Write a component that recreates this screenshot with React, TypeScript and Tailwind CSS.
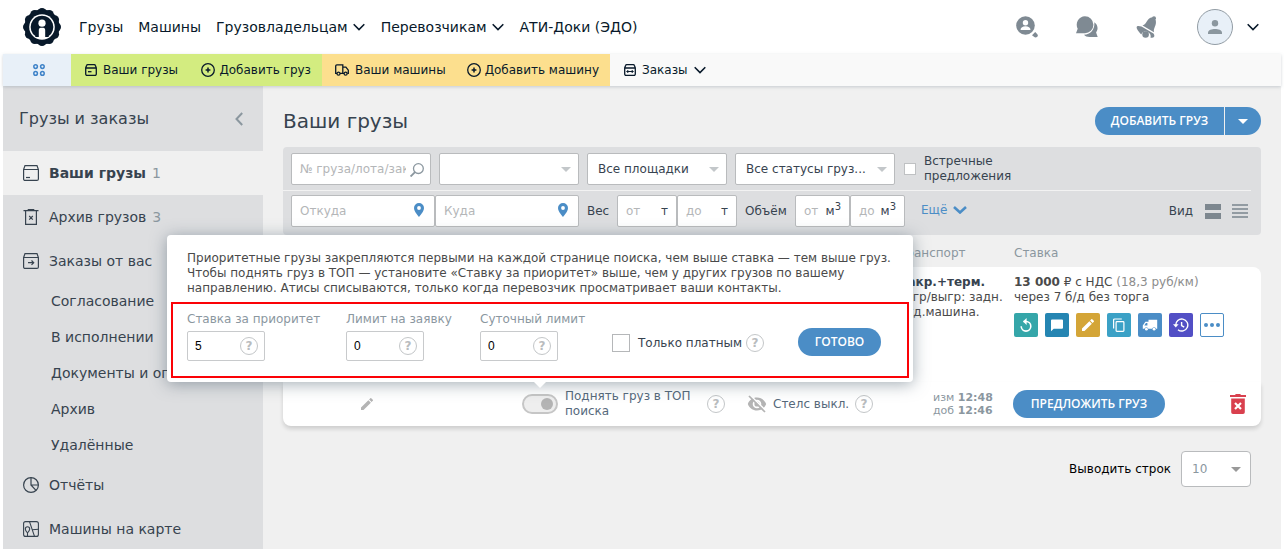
import React from "react";

const lobes = Array.from({ length: 12 }, (_, i) => (i * Math.PI) / 6);

function Logo() {
  return (
    <svg className="size-[38px]" viewBox="0 0 38 38" aria-hidden="true">
      <g fill="#08192a">
        <circle cx="19" cy="19" r="17.6" />
        {lobes.map((a) => (
          <circle key={a} cx={19 + 14.5 * Math.sin(a)} cy={19 - 14.5 * Math.cos(a)} r="4.5" />
        ))}
      </g>
      <circle cx="19" cy="19" r="12.8" fill="#fff" />
      <path
        fill="#08192a"
        d="M19 7.7A11.300 11.300 0 0 0 12.300 28.100v.9h3.500v-6.500c0-1.700.6-2.700 2-2.700h2.400c1.400 0 2 1 2 2.700V29h3.500v-.9A11.300 11.300 0 0 0 19 7.700z"
      />
      <circle cx="19" cy="15.200" r="3.600" fill="#fff" />
    </svg>
  );
}

function Chevron({ className = "" }: { className?: string }) {
  return (
    <svg className={`h-2 w-3 shrink-0 ${className}`} viewBox="0 0 12 8" fill="none" stroke="currentColor" strokeWidth="1.600" aria-hidden="true">
      <path d="M.7 1.200 6 6.500l5.300-5.300" />
    </svg>
  );
}

function Caret({ className = "" }: { className?: string }) {
  return (
    <svg className={`h-[5px] w-2.5 ${className}`} viewBox="0 0 10 5" fill="currentColor" aria-hidden="true">
      <path d="M0 0h10L5 5z" />
    </svg>
  );
}

function BoxIcon({ children, className = "size-4" }: { children?: React.ReactNode; className?: string }) {
  return (
    <svg className={className} viewBox="0 0 16 16" fill="none" stroke="currentColor" strokeWidth="1.200" aria-hidden="true">
      <path d="M.6 4.500 2 .6h12l1.400 3.900v9.400a1.500 1.500 0 0 1-1.500 1.500H2.100A1.500 1.500 0 0 1 .6 13.900zM.6 4.500h14.800" />
      {children}
    </svg>
  );
}

function SmallBox({ orders = false }: { orders?: boolean }) {
  return (
    <svg className="size-3 shrink-0" viewBox="0 0 12 12" fill="none" stroke="currentColor" strokeWidth="1.300" aria-hidden="true">
      <path d="M.7 3.800 1.600 1.500a1.200 1.200 0 0 1 1.200-.8h6.400a1.200 1.200 0 0 1 1.200.8l.9 2.300v6.200a1.300 1.300 0 0 1-1.300 1.300H2A1.300 1.300 0 0 1 .7 10zM.7 4h10.600" />
      {orders ? <path d="M2.800 7.500h6.400M4.300 6 2.800 7.500 4.300 9M7.700 6l1.500 1.500L7.700 9" strokeWidth="1" /> : <path d="M3 7.700h3.500" />}
    </svg>
  );
}

function PlusCircle() {
  return (
    <svg className="size-3.5 shrink-0" viewBox="0 0 14 14" fill="none" stroke="currentColor" strokeWidth="1.300" aria-hidden="true">
      <circle cx="7" cy="7" r="6.300" />
      <path d="M7 4.600v4.800M4.600 7h4.800" strokeWidth="1.500" />
    </svg>
  );
}

function TruckIcon() {
  return (
    <svg className="h-3 w-3.5 shrink-0" viewBox="0 0 14 12" fill="none" stroke="currentColor" strokeWidth="1.300" aria-hidden="true">
      <path d="M2 9.300H.7V2A1.200 1.200 0 0 1 1.900.8h5.900v8.500H5M7.800 3.200h3.100l2.400 3v3.100h-1M7.800 9.300H9" />
      <circle cx="3.500" cy="9.700" r="1.500" />
      <circle cx="10.600" cy="9.700" r="1.500" />
    </svg>
  );
}

function Help() {
  return (
    <button
      type="button"
      aria-label="Справка"
      className="flex size-[18px] shrink-0 items-center justify-center rounded-full border border-[#c3c6c8] bg-white text-xs font-bold leading-none text-[#b9bcbe]"
    >
      ?
    </button>
  );
}

function Select({ label, value, className = "" }: { label: string; value: string; className?: string }) {
  return (
    <div className={`relative ${className}`}>
      <select
        aria-label={label}
        className="h-8 w-full appearance-none rounded-xs border border-[#b9bbbd] bg-white pl-2.5 pr-6 text-xs text-[#37434f]"
      >
        <option>{value}</option>
      </select>
      <Caret className="pointer-events-none absolute right-2 top-3.5 text-[#c3c7ca]" />
    </div>
  );
}

function Place({ label }: { label: string }) {
  return (
    <div className="relative w-36">
      <input
        aria-label={label}
        placeholder={label}
        className="h-8 w-full rounded-xs border border-[#b9bbbd] bg-white pl-2 pr-7 text-xs placeholder:text-[#b4b6b8]"
      />
      <svg className="pointer-events-none absolute right-[11px] top-2 h-3.5 w-2.5" viewBox="0 0 10 14" aria-hidden="true">
        <path fill="#4b8dc6" fillRule="evenodd" d="M5 0a5 5 0 0 1 5 5c0 3.500-5 9-5 9S0 8.500 0 5a5 5 0 0 1 5-5zm0 3.100a1.900 1.900 0 1 0 0 3.800 1.900 1.900 0 0 0 0-3.800z" />
      </svg>
    </div>
  );
}

function Range({ label, hint, unit, className }: { label: string; hint: string; unit: React.ReactNode; className: string }) {
  return (
    <label className={`flex h-8 items-center justify-between rounded-xs border border-[#b9bbbd] bg-white px-2 text-xs text-[#37434f] ${className}`}>
      <input aria-label={`${label} ${hint}`} placeholder={hint} className="w-5 min-w-0 placeholder:text-[#b4b6b8]" />
      <span>{unit}</span>
    </label>
  );
}

const cubic = (
  <>
    м<sup className="text-[10px]">3</sup>
  </>
);

function LimitField({ id, label, value, className }: { id: string; label: string; value: string; className: string }) {
  return (
    <div className={className}>
      <label htmlFor={id} className="block whitespace-nowrap text-xs leading-4 text-[#8b979f]">
        {label}
      </label>
      <div className="mt-1 flex h-[30px] w-[78px] items-center justify-between rounded-xs border border-[#c8cacc] bg-white pl-[7px] pr-1.5">
        <input id={id} defaultValue={value} className="w-8 font-['Liberation_Sans',sans-serif] text-xs text-black" />
        <Help />
      </div>
    </div>
  );
}

function PriorityPopover() {
  return (
    <div className="absolute bottom-full left-1/2 z-10 mb-3 w-[746px] -translate-x-1/2 rounded-sm bg-white px-1 pb-1 pt-4 shadow-[0_2px_16px_rgba(70,90,105,0.5)]">
      <p className="px-4 text-xs leading-[15px] text-[#4a4a4a]">
        Приоритетные грузы закрепляются первыми на каждой странице поиска, чем выше ставка — тем выше груз.
        <br />
        Чтобы поднять груз в ТОП — установите «Ставку за приоритет» выше, чем у других грузов по вашему
        <br />
        направлению. Атисы списываются, только когда перевозчик просматривает ваши контакты.
      </p>
      <div className="mt-[6px] flex h-[76px] items-start border-2 border-[#fb0207] px-3.5 pt-[7px]">
        <LimitField id="rate" label="Ставка за приоритет" value="5" className="w-[159px]" />
        <LimitField id="order-limit" label="Лимит на заявку" value="0" className="w-[134px]" />
        <LimitField id="day-limit" label="Суточный лимит" value="0" className="w-[132px]" />
        <div className="mt-[23px] flex h-[18px] grow items-center">
          <input id="paid" type="checkbox" className="size-[18px] appearance-none border border-[#b5b7b9] bg-white" />
          <label htmlFor="paid" className="ml-2 mr-1 whitespace-nowrap text-xs text-[#37434f]">
            Только платным
          </label>
          <Help />
        </div>
        <button type="button" className="mr-3 mt-[17px] h-7 w-[83px] rounded-full bg-[#4b8dc6] font-['Open_Sans',sans-serif] text-xs font-semibold text-white">
          ГОТОВО
        </button>
      </div>
      <svg className="absolute left-1/2 top-full h-1.5 w-3 -translate-x-1/2" viewBox="0 0 12 6" fill="#fff" aria-hidden="true">
        <path d="M0 0h12L6 6z" />
      </svg>
    </div>
  );
}

function Pencil({ className }: { className: string }) {
  return (
    <svg className={className} viewBox="0 0 24 24" fill="currentColor" aria-hidden="true">
      <path d="M3 17.250V21h3.750L17.810 9.940l-3.750-3.750zM20.710 7.040a1 1 0 0 0 0-1.410l-2.340-2.340a1 1 0 0 0-1.410 0l-1.830 1.830 3.750 3.750z" />
    </svg>
  );
}

const glyph = "size-4";
const actions = [
  {
    name: "Обновить",
    color: "bg-[#35a6a9]",
    icon: (
      <svg className={glyph} viewBox="0 0 16 16" fill="none" stroke="#fff" strokeWidth="1.600">
        <path d="M3.200 9.300a4.800 4.800 0 1 0 4.800-4.800H5.500" />
        <path d="M8.600 1 5 4.500 8.600 8z" fill="#fff" stroke="none" />
      </svg>
    ),
  },
  {
    name: "Сообщение",
    color: "bg-[#2585b2]",
    icon: (
      <svg className={glyph} viewBox="0 0 16 16" fill="#fff">
        <path d="M3 2.500h10a1 1 0 0 1 1 1v7.200a1 1 0 0 1-1 1H4.700L2 14.300V3.500a1 1 0 0 1 1-1z" />
      </svg>
    ),
  },
  { name: "Изменить", color: "bg-[#d4a537]", icon: <Pencil className="size-4" /> },
  {
    name: "Копировать",
    color: "bg-[#3ba1c6]",
    icon: (
      <svg className={glyph} viewBox="0 0 16 16" fill="none" stroke="#fff" strokeWidth="1.200">
        <rect x="5.100" y="4.600" width="7.800" height="9.800" rx=".8" />
        <path d="M2.600 11.500V3A1 1 0 0 1 3.600 2h7.200" />
      </svg>
    ),
  },
  {
    name: "Машина",
    color: "bg-[#4b8dc6]",
    icon: (
      <svg className={glyph} viewBox="0 0 16 16" fill="#fff">
        <path fillRule="evenodd" d="M6.500 2.800h8.700v9h-1.100a2 2 0 0 0-3.900 0H6.300a2 2 0 0 0-3.900 0H.8V8.500l2.600-3.700h3.100zM5.400 6H3.900L2.300 8.400h3.100z" />
        <circle cx="4.400" cy="12.200" r="1.400" />
        <circle cx="12.100" cy="12.200" r="1.400" />
      </svg>
    ),
  },
  {
    name: "История",
    color: "bg-[#524fc5]",
    icon: (
      <svg className={glyph} viewBox="0 0 16 16" fill="none" stroke="#fff" strokeWidth="1.400">
        <path d="M2.800 8.500A6 6 0 1 1 5 12.700" />
        <path d="M0 7.300h5.600L2.800 10.600z" fill="#fff" stroke="none" />
        <path d="M8.600 5v3.500l2.600 1.600" />
      </svg>
    ),
  },
];

const crossTrash = (
  <svg className="size-4" viewBox="0 0 16 16" fill="none" stroke="currentColor" strokeWidth="1.200" aria-hidden="true">
    <path d="M.5 1.600h15M5.300 1.600V.6h5.400v1M2.600 1.600v13.800h10.800V1.600M6.200 7l3.600 3.600M9.800 7l-3.600 3.600" />
  </svg>
);

const subItems = ["Согласование", "В исполнении", "Документы и оплата", "Архив", "Удалённые"];

function SideLink({ icon, text, count, active = false }: { icon: React.ReactNode; text: string; count?: string; active?: boolean }) {
  return (
    <li className="last:*:pb-2.5">
      <a href="#" className={`flex items-center px-5 py-3 text-sm leading-5 ${active ? "bg-[#f0f0f0]" : ""}`}>
        {icon}
        <span className={`ml-2.5 ${active ? "font-bold" : ""}`}>{text}</span>
        {count && <span className="ml-1.5 text-[#8b979f]">{count}</span>}
      </a>
    </li>
  );
}

function Sidebar() {
  return (
    <aside className="w-[260px] shrink-0 bg-[#dddee0] text-[#37434f]">
      <div className="flex h-[65px] items-center justify-between pl-4 pr-5">
        <h2 className="text-base">Грузы и заказы</h2>
        <button type="button" aria-label="Свернуть">
          <svg className="h-3.5 w-2" viewBox="0 0 8 14" fill="none" stroke="#8b979f" strokeWidth="2" aria-hidden="true">
            <path d="M7.200 1 1.500 7l5.700 6" />
          </svg>
        </button>
      </div>
      <ul>
        <SideLink active text="Ваши грузы" count="1" icon={<BoxIcon><path d="M3 12.500h4" /></BoxIcon>} />
        <SideLink text="Архив грузов" count="3" icon={crossTrash} />
        <SideLink text="Заказы от вас" icon={<BoxIcon><path d="M5 9.700h5.500M8.500 7.500l2.200 2.200-2.200 2.200" /></BoxIcon>} />
        {subItems.map((t) => (
          <li key={t}>
            <a href="#" className="block py-2 pl-12 text-sm leading-5">{t}</a>
          </li>
        ))}
        <SideLink
          text="Отчёты"
          icon={
            <svg className="size-4" viewBox="0 0 16 16" fill="none" stroke="currentColor" strokeWidth="1.200" aria-hidden="true">
              <circle cx="8" cy="8" r="7.400" />
              <path d="M8 .6V8h7.400M8 8l5 5.400" />
            </svg>
          }
        />
        <SideLink
          text="Машины на карте"
          icon={
            <svg className="size-4" viewBox="0 0 16 16" fill="none" stroke="currentColor" strokeWidth="1.100" aria-hidden="true">
              <rect x=".6" y=".6" width="14.800" height="14.800" rx="2" />
              <path d="m6.500.6 5 14.800M9.300 8.800l6.100-.6M4.500 12S2.300 9.600 2.300 8a2.200 2.200 0 0 1 4.400 0c0 1.600-2.200 4-2.200 4zv3.400" />
            </svg>
          }
        />
      </ul>
    </aside>
  );
}

function Header() {
  return (
    <header className="flex h-[54px] items-center justify-between bg-white pl-5 pr-[22px] text-sm text-[#08192a]">
      <nav className="flex items-center">
        <a href="#" aria-label="Главная" className="mr-[18px]"><Logo /></a>
        <a href="#" className="mr-[15px]">Грузы</a>
        <a href="#" className="mr-[15px]">Машины</a>
        <button type="button" className="mr-4 flex items-center gap-[5px]">Грузовладельцам <Chevron /></button>
        <button type="button" className="mr-4 flex items-center gap-[5px]">Перевозчикам <Chevron /></button>
        <a href="#">АТИ-Доки (ЭДО)</a>
      </nav>
      <div className="flex items-center text-[#7f8a93]">
        <button type="button" aria-label="Поиск участников" className="mr-[38px]">
          <svg className="size-[22px]" viewBox="0 0 22 22" aria-hidden="true">
            <circle cx="9.500" cy="9.500" r="9.300" fill="currentColor" />
            <path d="m16 19.200 3.200-3.200 1.900 1.900c1 1 1 2 .1 2.900s-2.300.9-3.200 0z" fill="currentColor" />
            <circle cx="9.500" cy="6.800" r="2.700" fill="#fff" />
            <path d="M4.500 14c0-2.600 2.300-3.800 5-3.800s5 1.200 5 3.800z" fill="#fff" />
          </svg>
        </button>
        <button type="button" aria-label="Сообщения" className="mr-[38px]">
          <svg className="size-[22px]" viewBox="0 0 22 22" fill="currentColor" aria-hidden="true">
            <path d="M18.300 6.200c3.600 2.200 4.200 7 1.800 10.200l1.600 4.600h-8c-2.700 0-4.500-1-5.700-2.300 7-.2 11-5.600 10.300-12.500z" />
            <path d="M8.900.3a8.500 8.500 0 1 1 0 17H0l1.700-4.500A8.500 8.500 0 0 1 8.900.3z" />
          </svg>
        </button>
        <button type="button" aria-label="Уведомления" className="mr-[39px]">
          <svg className="size-[22px]" viewBox="0 0 22 22" fill="currentColor" aria-hidden="true">
            <circle cx="18" cy="2.200" r="2" />
            <path d="M16.500 1.200C10 2.200 11.500 8.200 6.500 9.500L18 16.300C17 12 21 9.500 19.700 4z" />
            <path d="M.6 11.200c.2-1.700 2.700-1.400 4.900-.6l12 7c1.300 1.800 1.300 4.200-1.300 4.200h-1.700c.5-1.800.1-3.700-1.700-5-2.500-1.900-5.500-1.500-7 .7l-.6 1C2.800 15.800.4 13 .6 11.200z" />
            <circle cx="9.600" cy="18.500" r="3.300" />
          </svg>
        </button>
        <button type="button" aria-label="Профиль" className="flex items-center gap-3.5">
          <span className="flex size-9 items-center justify-center rounded-full border border-[#929ca4] bg-[#e8f0f8]">
            <svg className="h-3.5 w-3.5" viewBox="0 0 14 14" fill="#8b979f" aria-hidden="true">
              <circle cx="7" cy="3.300" r="3.200" />
              <path d="M0 14v-1.500C0 10 4 8.900 7 8.900s7 1.100 7 3.600V14z" />
            </svg>
          </span>
          <Chevron className="text-[#08192a]" />
        </button>
      </div>
    </header>
  );
}

function SubNav() {
  return (
    <nav className="relative flex h-8 items-stretch bg-[#f9f9f9] text-xs text-[#08192a] shadow-[0_1px_3px_rgba(120,135,150,0.35)]">
      <a href="#" aria-label="Сервисы" className="flex w-[68px] items-center justify-center bg-[#e8f0f8] pl-1">
        <svg className="size-3" viewBox="0 0 12 12" fill="none" stroke="#3f83c8" strokeWidth="1.500" aria-hidden="true">
          <circle cx="2.600" cy="2.600" r="1.800" />
          <circle cx="9.400" cy="2.600" r="1.800" />
          <circle cx="2.600" cy="9.400" r="1.800" />
          <circle cx="9.400" cy="9.400" r="1.800" />
        </svg>
      </a>
      <div className="flex w-[251px] items-center justify-between bg-[#d3ec80] pl-3.5 pr-[11px]">
        <a href="#" className="flex items-center gap-1.5"><SmallBox />Ваши грузы</a>
        <a href="#" className="flex items-center gap-1"><PlusCircle />Добавить груз</a>
      </div>
      <div className="flex w-72 items-center justify-between bg-[#fcdf8e] pl-[13px] pr-[11px]">
        <a href="#" className="flex items-center gap-1.5"><TruckIcon />Ваши машины</a>
        <a href="#" className="flex items-center gap-1"><PlusCircle />Добавить машину</a>
      </div>
      <button type="button" className="flex items-center gap-1.5 px-3.5"><SmallBox orders />Заказы<Chevron /></button>
    </nav>
  );
}

function Filters() {
  return (
    <section className="mt-3 rounded bg-[#dddee0] text-xs text-[#37434f]">
      <div className="mr-2.5 flex h-11 items-center gap-2 border-b border-[#f2f2f2] pl-2 pt-px">
        <div className="relative w-[140px]">
          <input
            aria-label="Номер груза"
            placeholder="№ груза/лота/заказа"
            className="h-8 w-full rounded-xs border border-[#b9bbbd] bg-white pl-2 pr-6 text-xs placeholder:text-[#b4b6b8]"
          />
          <svg className="absolute right-[7px] top-[10px] size-3.5" viewBox="0 0 14 14" fill="none" stroke="#8b979f" strokeWidth="1.300" aria-hidden="true">
            <circle cx="8.400" cy="5.600" r="4.900" />
            <path d="M5 9.200.6 13.500" strokeWidth="1.800" />
          </svg>
        </div>
        <Select label="Фильтр" value="" className="w-[140px]" />
        <Select label="Площадки" value="Все площадки" className="w-[140px]" />
        <Select label="Статусы" value="Все статусы груз..." className="w-40" />
        <label className="ml-px flex items-center gap-2 leading-[15px]">
          <input type="checkbox" className="size-3 appearance-none border border-[#bfc1c3] bg-white" />
          <span>Встречные<br />предложения</span>
        </label>
      </div>
      <div className="flex h-11 items-start pl-2 pr-[13px] pt-1">
        <Place label="Откуда" />
        <Place label="Куда" />
        <span className="ml-2 w-[30px] leading-8">Вес</span>
        <Range label="Вес" hint="от" unit="т" className="w-[60px]" />
        <Range label="Вес" hint="до" unit="т" className="w-[60px]" />
        <span className="ml-2 w-[50px] leading-8">Объём</span>
        <Range label="Объём" hint="от" unit={cubic} className="w-[55px]" />
        <Range label="Объём" hint="до" unit={cubic} className="w-[55px]" />
        <button type="button" className="ml-4 flex h-[30px] items-center gap-1.5 text-[#4b8dc6]">
          Ещё
          <svg className="h-2 w-3.5" viewBox="0 0 14 8" fill="none" stroke="currentColor" strokeWidth="2.600" aria-hidden="true">
            <path d="m1 1 6 5.500L13 1" />
          </svg>
        </button>
        <div className="ml-auto flex h-8 items-center">
          <span className="mr-3">Вид</span>
          <button type="button" aria-label="Карточки" className="mr-[11px] flex w-4 flex-col gap-[3px]">
            <span className="h-1.5 bg-[#7d878f]" />
            <span className="h-1.5 bg-[#7d878f]" />
          </button>
          <button type="button" aria-label="Список" className="flex w-4 flex-col gap-0.5">
            <span className="h-0.5 bg-[#929ba2]" />
            <span className="h-0.5 bg-[#929ba2]" />
            <span className="h-0.5 bg-[#929ba2]" />
            <span className="h-0.5 bg-[#929ba2]" />
          </button>
        </div>
      </div>
    </section>
  );
}

function CargoTable() {
  return (
    <table className="w-full table-fixed border-separate border-spacing-0 text-left text-xs leading-[15px] text-[#4a4a4a]">
      <thead>
        <tr className="h-8 text-[#8b979f]">
          <th aria-label="Груз" />
          <th className="w-[115px] pt-1 font-normal">Транспорт</th>
          <th className="w-[247px] pt-1 font-normal">Ставка</th>
        </tr>
      </thead>
      <tbody className="align-top">
        <tr className="h-[115px]">
          <td className="rounded-tl-lg bg-white" />
          <td className="whitespace-nowrap bg-white pt-2">
            <b className="text-[#37434f]">Закр.+терм.</b>
            <br />
            загр/выгр: задн.
            <br />
            отд.машина.
          </td>
          <td className="rounded-tr-lg bg-white pt-2">
            <b>13 000</b> ₽ с НДС <span className="text-[#8c8c8c]">(18,3 руб/км)</span>
            <br />
            через 7 б/д без торга
            <div className="mt-2 flex gap-[7px]">
              {actions.map((a) => (
                <button key={a.name} type="button" aria-label={a.name} className={`flex size-6 items-center justify-center rounded-xs text-white ${a.color}`}>
                  {a.icon}
                </button>
              ))}
              <button type="button" aria-label="Ещё" className="flex size-6 items-center justify-center gap-0.5 rounded-xs border border-[#4b8dc6] bg-white">
                <span className="size-1 rounded-full bg-[#4b8dc6]" />
                <span className="size-1 rounded-full bg-[#4b8dc6]" />
                <span className="size-1 rounded-full bg-[#4b8dc6]" />
              </button>
            </div>
          </td>
        </tr>
        <tr>
          <td colSpan={3} className="h-11 rounded-b-lg bg-white p-0 shadow-[0_3px_4px_rgba(0,0,0,0.14)]">
            <div className="flex h-11 items-center justify-end text-[#56697b]">
              <button type="button" aria-label="Изменить примечание" className="mr-[147px] text-[#b4b4b4]"><Pencil className="size-4" /></button>
              <div className="relative flex h-5 w-9">
                <button type="button" role="switch" aria-checked="true" aria-label="Поднять груз в ТОП" className="flex w-9 items-center justify-end rounded-full border-2 border-[#c6c6c6] bg-[#eee] px-[3px]">
                  <span className="size-3 rounded-full bg-[#b4b4b4]" />
                </button>
                <PriorityPopover />
              </div>
              <span className="ml-[7px] w-[142px]">Поднять груз в ТОП<br />поиска</span>
              <Help />
              <svg className="ml-[22px] mr-1.5 size-5" viewBox="0 0 20 20" aria-hidden="true">
                <path fill="#b4b4b4" fillRule="evenodd" d="M10 3.500c4.200 0 7.700 2.600 9.200 6.500-1.500 3.900-5 6.500-9.200 6.500S2.300 13.900.8 10C2.300 6.100 5.800 3.500 10 3.500zm0 2.200a4.300 4.300 0 1 0 0 8.600 4.300 4.300 0 0 0 0-8.600zm0 1.700a2.600 2.600 0 1 1 0 5.200 2.600 2.600 0 0 1 0-5.200z" />
                <path d="m3.500 1.500 15 15" stroke="#fff" strokeWidth="1.600" />
                <path d="m2 2 16 16" stroke="#b4b4b4" strokeWidth="1.700" />
              </svg>
              <span className="w-[82px] whitespace-nowrap">Стелс выкл.</span>
              <Help />
              <div className="ml-[60px] w-20 text-[11px] leading-[13px] text-[#8b979f]">
                изм <b>12:48</b>
                <br />
                доб <b>12:46</b>
              </div>
              <button type="button" className="mr-[65px] h-7 w-[152px] rounded-full bg-[#4b8dc6] font-['Open_Sans',sans-serif] text-xs font-semibold text-white">
                ПРЕДЛОЖИТЬ ГРУЗ
              </button>
              <button type="button" aria-label="Удалить" className="mr-[15px]">
                <svg className="h-5 w-4" viewBox="0 0 16 20" fill="#d9404e" aria-hidden="true">
                  <path d="M0 1h5l.8-1h4.400l.8 1h5v2H0zM1.200 4.500h13.600v13.700a1.800 1.800 0 0 1-1.800 1.800H3a1.800 1.800 0 0 1-1.800-1.800z" />
                  <path d="m5 9 6 6M11 9l-6 6" stroke="#fff" strokeWidth="2.200" />
                </svg>
              </button>
            </div>
          </td>
        </tr>
      </tbody>
    </table>
  );
}

export default function App() {
  return (
    <div className="flex min-h-screen flex-col bg-white px-[3px] pb-[3px] font-['DejaVu_Sans',Verdana,sans-serif]">
      <Header />
      <SubNav />
      <div className="flex grow">
        <Sidebar />
        <main className="min-w-0 grow bg-[#f0f0f0] px-5 pt-[21px]">
          <div className="flex items-center justify-between">
            <h1 className="text-xl leading-7 text-[#37434f]">Ваши грузы</h1>
            <div className="flex h-7 gap-px overflow-hidden rounded-full font-['Open_Sans',sans-serif] text-xs font-semibold text-white">
              <button type="button" className="w-[129px] bg-[#4b8dc6]">ДОБАВИТЬ ГРУЗ</button>
              <button type="button" aria-label="Другие действия" className="flex w-9 items-center justify-center bg-[#4b8dc6]"><Caret /></button>
            </div>
          </div>
          <Filters />
          <CargoTable />
          <div className="mr-2.5 mt-[25px] flex items-center justify-end gap-2.5 text-xs">
            <label htmlFor="rows" className="text-black">Выводить строк</label>
            <div className="relative w-[70px]">
              <select id="rows" className="h-9 w-full appearance-none rounded border border-[#b9bbbd] bg-white pl-2.5 text-[#8b979f]">
                <option>10</option>
              </select>
              <Caret className="pointer-events-none absolute right-2.5 top-4 text-[#999]" />
            </div>
          </div>
        </main>
      </div>
    </div>
  );
}
